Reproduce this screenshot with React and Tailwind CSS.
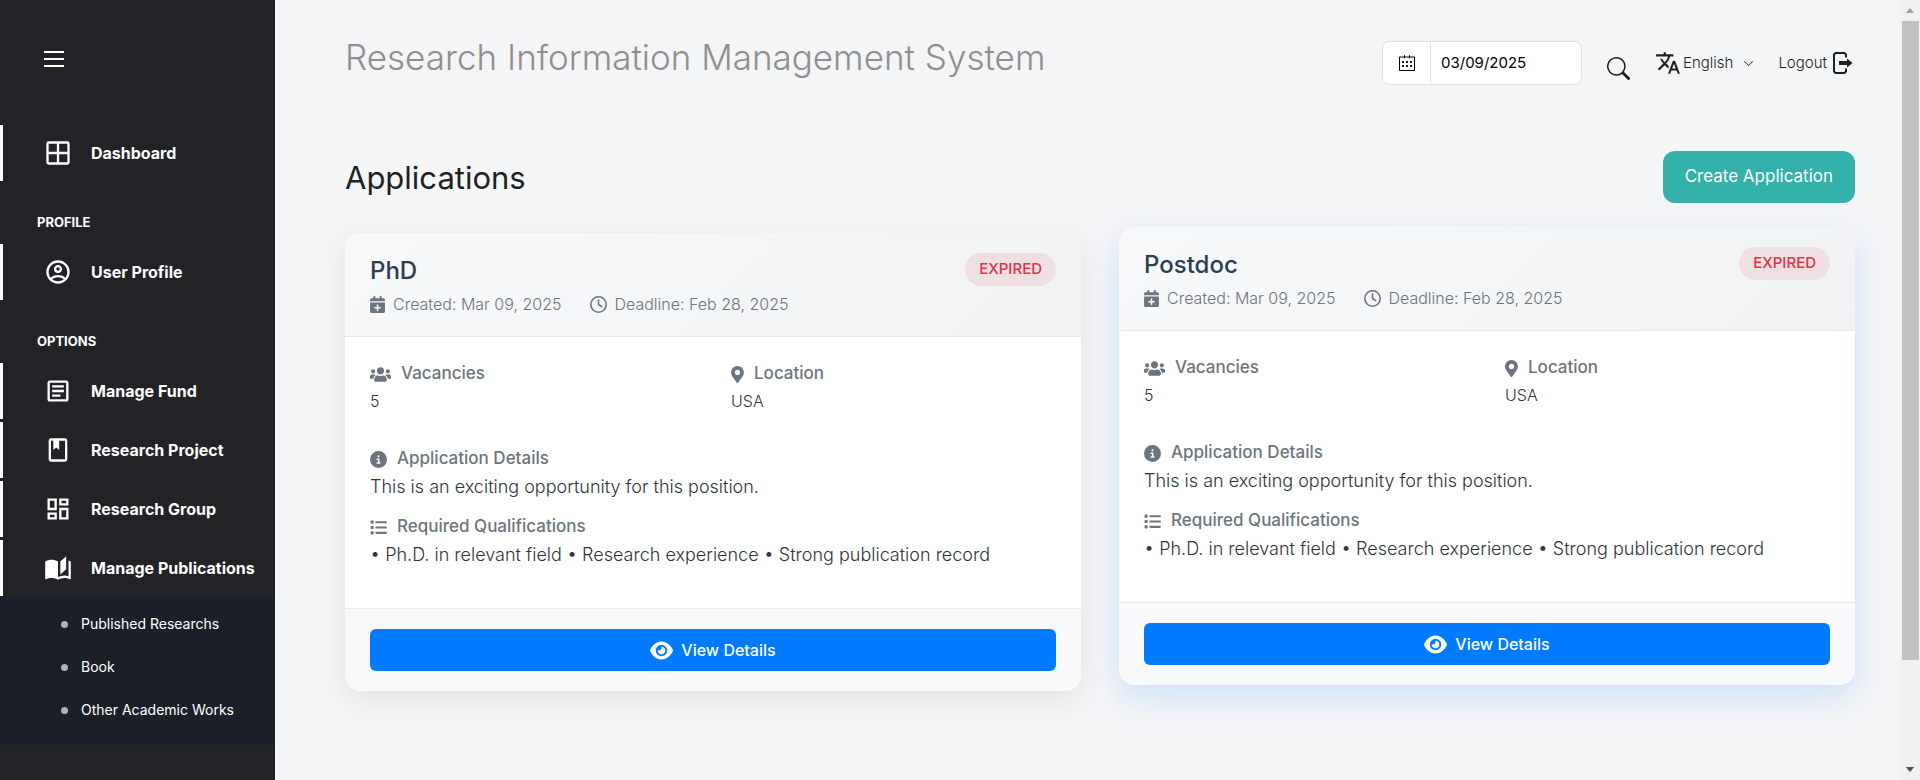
import React from "react";
import { FaCalendarPlus, FaRegClock, FaCircleInfo, FaList, FaEye } from "react-icons/fa6";
import { FaUsers, FaMapMarkerAlt } from "react-icons/fa";
import { MdTranslate } from "react-icons/md";
import { BsSearch, BsChevronDown } from "react-icons/bs";
import { SlCalender } from "react-icons/sl";

const paths = {
  grid: "M4,2H20A2,2 0 0,1 22,4V20A2,2 0 0,1 20,22H4C2.92,22 2,21.1 2,20V4A2,2 0 0,1 4,2M4,4V11H11V4H4M4,20H11V13H4V20M20,20V13H13V20H20M20,4H13V11H20V4Z",
  user: "M12,2A10,10 0 0,0 2,12A10,10 0 0,0 12,22A10,10 0 0,0 22,12A10,10 0 0,0 12,2M7.07,18.28C7.5,17.38 10.12,16.5 12,16.5C13.88,16.5 16.5,17.38 16.93,18.28C15.57,19.36 13.86,20 12,20C10.14,20 8.43,19.36 7.07,18.28M18.36,16.83C16.93,15.09 13.46,14.5 12,14.5C10.54,14.5 7.07,15.09 5.64,16.83C4.62,15.5 4,13.82 4,12C4,7.59 7.59,4 12,4C16.41,4 20,7.59 20,12C20,13.82 19.38,15.5 18.36,16.83M12,6C10.06,6 8.5,7.56 8.5,9.5C8.5,11.44 10.06,13 12,13C13.94,13 15.5,11.44 15.5,9.5C15.5,7.56 13.94,6 12,6M12,11A1.5,1.5 0 0,1 10.5,9.5A1.5,1.5 0 0,1 12,8A1.5,1.5 0 0,1 13.5,9.5A1.5,1.5 0 0,1 12,11Z",
  note: "M5,3C3.89,3 3,3.89 3,5V19C3,20.11 3.89,21 5,21H19C20.11,21 21,20.11 21,19V5C21,3.89 20.11,3 19,3H5M5,5H19V19H5V5M7,7V9H17V7H7M7,11V13H17V11H7M7,15V17H14V15H7Z",
  book: "M18,2A2,2 0 0,1 20,4V20A2,2 0 0,1 18,22H6A2,2 0 0,1 4,20V4A2,2 0 0,1 6,2H18M18,4H13V12L10.5,9.75L8,12V4H6V20H18V4Z",
  board:
    "M19,5V7H15V5H19M9,5V11H5V5H9M19,13V19H15V13H19M9,17V19H5V17H9M21,3H13V9H21V3M11,3H3V13H11V3M21,11H13V21H21V11M11,15H3V21H11V15Z",
  open: "M19 2L14 6.5V17.5L19 13V2M6.5 5C4.55 5 2.45 5.4 1 6.5V21.16C1 21.41 1.25 21.66 1.5 21.66C1.6 21.66 1.65 21.59 1.75 21.59C3.1 20.94 5.05 20.5 6.5 20.5C8.45 20.5 10.55 20.9 12 22C13.35 21.15 15.8 20.5 17.5 20.5C19.15 20.5 20.85 20.81 22.25 21.56C22.35 21.61 22.4 21.59 22.5 21.59C22.75 21.59 23 21.34 23 21.09V6.5C22.4 6.05 21.75 5.75 21 5.5V7.5V19C19.9 18.65 18.7 18.5 17.5 18.5C15.8 18.5 13.35 19.15 12 20V6.5C10.55 5.4 8.45 5 6.5 5Z",
};

function NavItem({ icon, label }) {
  return (
    <a
      href="#"
      className="flex h-14 items-center gap-[19px] border-l-[3px] border-white pl-[41px] text-base font-bold whitespace-nowrap text-white"
    >
      <svg viewBox="0 0 24 24" className="size-7 shrink-0 fill-current" aria-hidden="true">
        <path d={paths[icon]} />
      </svg>
      {label}
    </a>
  );
}

function NavHeading({ children }) {
  return (
    <h2 className="flex h-[63px] items-center pt-5 pl-[37px] text-[13px] font-bold text-white">
      {children}
    </h2>
  );
}

function Sidebar() {
  return (
    <nav className="flex w-[275px] shrink-0 flex-col bg-[#232227]">
      <div className="flex h-[125px] items-start pt-[50px] pl-11">
        <button type="button" aria-label="Toggle menu">
          <svg viewBox="0 0 20 18" className="h-[18px] w-5 stroke-white stroke-2" aria-hidden="true">
            <path d="M0 2h20M0 9h20M0 16h20" />
          </svg>
        </button>
      </div>
      <NavItem icon="grid" label="Dashboard" />
      <NavHeading>PROFILE</NavHeading>
      <NavItem icon="user" label="User Profile" />
      <NavHeading>OPTIONS</NavHeading>
      <div className="flex flex-col gap-[3px]">
        <NavItem icon="note" label="Manage Fund" />
        <NavItem icon="book" label="Research Project" />
        <NavItem icon="board" label="Research Group" />
        <NavItem icon="open" label="Manage Publications" />
      </div>
      <ul className="bg-[#1b1f27] pt-1.5 pb-3.5">
        {["Published Researchs", "Book", "Other Academic Works"].map((t) => (
          <li key={t}>
            <a href="#" className="flex h-[43px] items-center gap-[13px] pl-[61px] text-sm text-white">
              <span className="mt-0.5 size-[7px] rounded-full bg-[#b1b1b1]" />
              {t}
            </a>
          </li>
        ))}
      </ul>
    </nav>
  );
}

function Header() {
  return (
    <header className="flex items-start justify-between pt-[35px]">
      <h1 className="text-[35px] leading-[44px] font-light text-[#8f8f8f]">
        Research Information Management System
      </h1>
      <div className="flex items-center pt-1.5 pr-0.5 text-[15px] text-[#1f1f1f]">
        <label className="flex h-11 w-[200px] items-center rounded-lg border border-[#dee2e6] bg-white text-black">
          <span className="flex h-10 w-12 items-center justify-center border-r border-[#dee2e6]">
            <SlCalender className="size-4" aria-hidden="true" />
          </span>
          <input
            aria-label="Date"
            defaultValue="03/09/2025"
            className="w-0 grow bg-transparent px-2.5 outline-none"
          />
        </label>
        <button type="button" aria-label="Search" className="mt-2.5 ml-[25px]">
          <BsSearch className="size-[23px]" />
        </button>
        <button type="button" className="ml-[25px] flex items-center font-light">
          <MdTranslate className="mr-0.5 size-[26px]" aria-hidden="true" />
          English
          <BsChevronDown className="ml-2.5 size-[11px]" aria-hidden="true" />
        </button>
        <a href="#" className="ml-6 flex items-center gap-1.5 font-light">
          Logout
          <svg viewBox="0 0 20 22" className="h-[22px] w-5" aria-hidden="true">
            <path
              d="M13 5.500V2.500L11.500 1H2.500L1 2.500v17L2.500 21h9l1.500-1.500v-3"
              fill="none"
              stroke="currentColor"
              strokeWidth="2"
            />
            <path d="M6 9h8V6.500L19.500 11 14 15.500V13H6Z" fill="currentColor" />
          </svg>
        </a>
      </div>
    </header>
  );
}

function Label({ icon: Icon, iconClass, children }) {
  return (
    <h4 className="flex h-6 items-center gap-2.5 text-[17px] font-medium text-[#6c757d]">
      <Icon className={iconClass} aria-hidden="true" />
      {children}
    </h4>
  );
}

function Card({ title, raised }) {
  return (
    <article
      className={
        raised
          ? "-translate-y-1.5 overflow-hidden rounded-2xl bg-white shadow-[0_12px_32px_rgba(0,123,255,0.16)]"
          : "overflow-hidden rounded-2xl bg-white shadow-[0_8px_30px_rgba(0,0,0,0.08)]"
      }
    >
      <div className="border-b border-[#e3e7ea] bg-linear-135 from-[#f8f9fb] to-[#f1f2f4] px-[25px] py-5">
        <div className="flex items-start justify-between">
          <h3 className="pt-[3px] text-2xl leading-[30px] font-medium text-[#2c3e50]">{title}</h3>
          <span className="flex h-[33px] items-center rounded-full bg-[#efdfe2] px-3.5 text-[15px] font-medium text-[#dc3545]">
            EXPIRED
          </span>
        </div>
        <div className="mt-1.5 flex gap-7 font-light text-[#6c757d]">
          <span className="flex items-center gap-2">
            <FaCalendarPlus className="h-[17px] w-[15px]" aria-hidden="true" />
            Created: Mar 09, 2025
          </span>
          <span className="flex items-center gap-2">
            <FaRegClock className="size-[17px]" aria-hidden="true" />
            Deadline: Feb 28, 2025
          </span>
        </div>
      </div>
      <div className="px-[25px] pt-[25px] pb-10 text-[#2f353b]">
        <div className="grid grid-cols-2 gap-9">
          <div>
            <Label icon={FaUsers} iconClass="h-[17px] w-[21px]">Vacancies</Label>
            <p className="mt-[3px] font-light">5</p>
          </div>
          <div>
            <Label icon={FaMapMarkerAlt} iconClass="h-[17px] w-[13px]">Location</Label>
            <p className="mt-[3px] font-light">USA</p>
          </div>
        </div>
        <div className="mt-[34px]">
          <Label icon={FaCircleInfo} iconClass="size-[17px]">Application Details</Label>
          <p className="mt-[3px] text-lg leading-[26px] font-light">This is an exciting opportunity for this position.</p>
        </div>
        <div className="mt-[15px]">
          <Label icon={FaList} iconClass="size-[17px]">Required Qualifications</Label>
          <p className="mt-[3px] text-lg leading-[26px] font-light">
            • Ph.D. in relevant field • Research experience • Strong publication record
          </p>
        </div>
      </div>
      <div className="border-t border-[#e8eaec] bg-[#f8f9fb] px-[25px] py-5">
        <button
          type="button"
          className="flex h-[42px] w-full items-center justify-center gap-2 rounded-md bg-[#007bff] font-medium text-white"
        >
          <FaEye className="size-[23px]" aria-hidden="true" />
          View Details
        </button>
      </div>
    </article>
  );
}

export default function App() {
  return (
    <div className="flex min-h-screen bg-[#f4f5f7] font-[Inter,sans-serif] text-base">
      <Sidebar />
      <main className="min-w-0 grow pr-[45px] pl-[70px]">
        <Header />
        <div className="mt-[66px] flex items-center justify-between">
          <h2 className="pt-0.5 text-[31px] leading-9 text-[#1f1f1f]">Applications</h2>
          <button type="button" className="h-[52px] rounded-xl bg-[#34b1aa] px-[22px] text-[17px] text-white">
            Create Application
          </button>
        </div>
        <div className="mt-[30px] grid grid-cols-2 gap-[38px]">
          <Card title="PhD" />
          <Card title="Postdoc" raised />
        </div>
      </main>
      <div className="flex w-5 shrink-0 flex-col items-center bg-[#f1f1f1]" aria-hidden="true">
        <svg viewBox="0 0 10 6" className="my-2 h-[5px] w-2.5 fill-[#a3a3a3]">
          <path d="M5 0l5 6H0z" />
        </svg>
        <div className="h-[639px] w-[17px] bg-[#c1c1c1]" />
        <svg viewBox="0 0 10 6" className="mt-auto mb-2 h-[5px] w-2.5 fill-[#505050]">
          <path d="M0 0h10L5 6z" />
        </svg>
      </div>
    </div>
  );
}
